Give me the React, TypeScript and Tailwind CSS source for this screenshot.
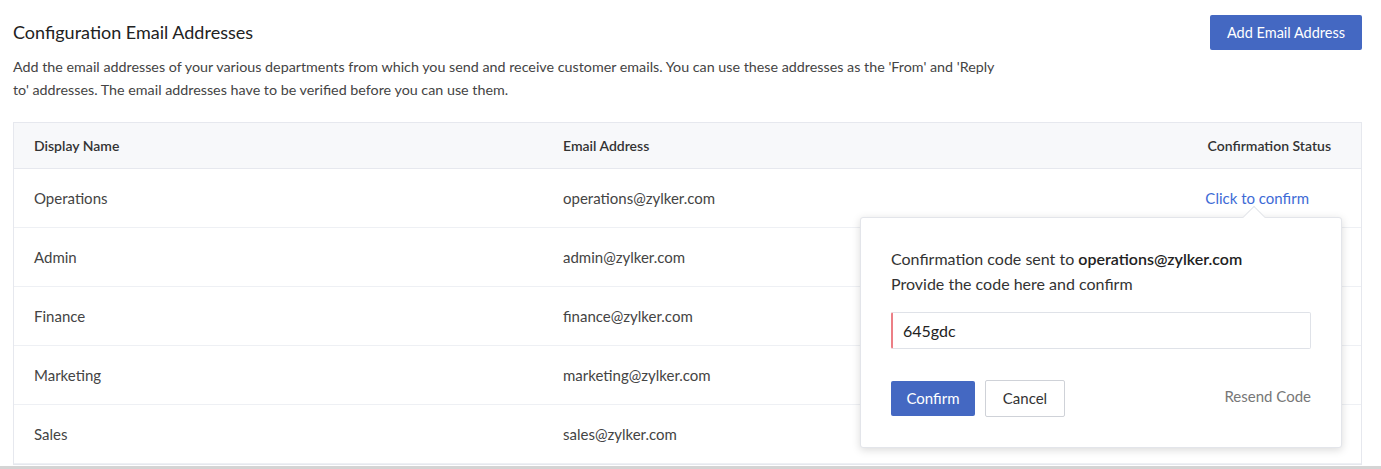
import React from "react";

interface Row {
  name: string;
  email: string;
}

const rows: Row[] = [
  { name: "Operations", email: "operations@zylker.com" },
  { name: "Admin", email: "admin@zylker.com" },
  { name: "Finance", email: "finance@zylker.com" },
  { name: "Marketing", email: "marketing@zylker.com" },
  { name: "Sales", email: "sales@zylker.com" },
];

const App: React.FC = () => {
  return (
    <div
      className="h-[469px] bg-white text-[#333] flex flex-col overflow-hidden"
      style={{ fontFamily: "Lato, 'Open Sans', sans-serif" }}
    >
      <div className="flex-1 pl-[13px] pr-[19px] pt-[15px] overflow-hidden">
        <div className="flex justify-between items-start">
          <div>
            <h1 className="text-[18px] leading-[22px] mt-[6px] text-[#222]">
              Configuration Email Addresses
            </h1>
            <p className="mt-[12px] text-[14.3px] leading-[23px] text-[#444] max-w-[990px]">
              Add the email addresses of your various departments from which you send and receive
              customer emails. You can use these addresses as the 'From' and 'Reply to' addresses.
              The email addresses have to be verified before you can use them.
            </p>
          </div>
          <button className="h-[35px] w-[152px] rounded-[2px] bg-[#4468c2] text-white text-[14.5px]">
            Add Email Address
          </button>
        </div>

        <div className="mt-[21px] border border-[#e6e8ee] text-[15px]">
          <div className="grid grid-cols-[529px_1fr_auto] h-[46px] items-center bg-[#f7f8fa] border-b border-[#e6e8ee] px-[20px] text-[14px] font-semibold text-[#333]">
            <div>Display Name</div>
            <div>Email Address</div>
            <div className="pr-[10px]">Confirmation Status</div>
          </div>
          {rows.map((row, index) => (
            <div
              key={row.name}
              className="grid grid-cols-[529px_1fr_auto] h-[59px] items-center border-b border-[#eef0f4] px-[20px] text-[#444]"
            >
              <div>{row.name}</div>
              <div>{row.email}</div>
              <div className="relative pr-[32px]">
                {index === 0 ? (
                  <>
                    <span className="text-[#3d6ad6]">Click to confirm</span>
                    <div className="absolute right-[-1px] top-[30px] w-[482px] z-10">
                      <div className="absolute right-[80px] top-[-8px] w-[16px] h-[16px] rotate-45 bg-white border-l border-t border-[#e3e5ea]" />
                      <div className="bg-white border border-[#e3e5ea] rounded-[3px] shadow-[0_2px_8px_rgba(0,0,0,0.15)] px-[30px] pt-[28px] pb-[30px]">
                        <p className="text-[16px] leading-[25px] text-[#333]">
                          Confirmation code sent to{" "}
                          <span className="font-semibold text-[#222]">operations@zylker.com</span>
                        </p>
                        <p className="text-[16px] leading-[25px] text-[#333]">
                          Provide the code here and confirm
                        </p>
                        <input
                          readOnly
                          value="645gdc"
                          className="mt-[16px] block w-full h-[37px] border border-[#dfe2e8] border-l-2 border-l-[#ec7f86] rounded-[2px] px-[10px] text-[16px] text-[#222] outline-none"
                        />
                        <div className="mt-[31px] flex items-center">
                          <button className="h-[35px] w-[84px] rounded-[2px] bg-[#4468c2] text-white text-[15px]">
                            Confirm
                          </button>
                          <button className="ml-[10px] h-[37px] w-[80px] rounded-[2px] border border-[#cfd2d8] bg-white text-[#333] text-[15px]">
                            Cancel
                          </button>
                          <span className="ml-auto text-[15px] text-[#777] -mt-[4px]">Resend Code</span>
                        </div>
                      </div>
                    </div>
                  </>
                ) : null}
              </div>
            </div>
          ))}
        </div>
      </div>
      <div className="h-[3px] bg-[#d4d4d4] shrink-0" />
    </div>
  );
};

export default App;
